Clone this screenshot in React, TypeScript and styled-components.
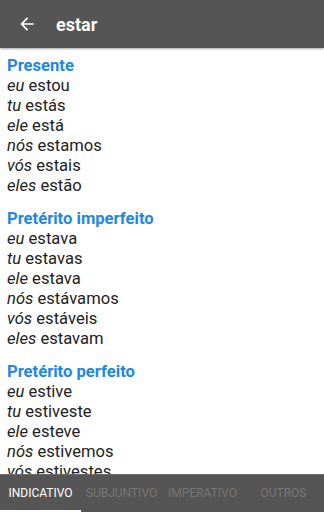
import React from 'react';
import styled, { createGlobalStyle } from 'styled-components';

type Row = { pronoun: string; form: string };
type Tense = { title: string; rows: Row[] };

const pronouns = ['eu', 'tu', 'ele', 'nós', 'vós', 'eles'];

const make = (title: string, forms: string[]): Tense => ({
  title,
  rows: forms.map((form, i) => ({ pronoun: pronouns[i], form })),
});

const tenses: Tense[] = [
  make('Presente', ['estou', 'estás', 'está', 'estamos', 'estais', 'estão']),
  make('Pretérito imperfeito', ['estava', 'estavas', 'estava', 'estávamos', 'estáveis', 'estavam']),
  make('Pretérito perfeito', ['estive', 'estiveste', 'esteve', 'estivemos', 'estivestes', 'estiveram']),
];

const tabs = ['INDICATIVO', 'SUBJUNTIVO', 'IMPERATIVO', 'OUTROS'];

const GlobalStyle = createGlobalStyle`
  html, body {
    margin: 0;
    padding: 0;
    background: #ffffff;
    font-family: Roboto, "Liberation Sans", sans-serif;
  }
`;

const Screen = styled.div`
  width: 324px;
  height: 512px;
  display: flex;
  flex-direction: column;
  overflow: hidden;
  background: #ffffff;
`;

const Toolbar = styled.header`
  flex: 0 0 48px;
  display: flex;
  align-items: center;
  background: #555555;
  box-shadow: 0 1px 2px rgba(0, 0, 0, 0.35);
  position: relative;
  z-index: 1;
`;

const BackButton = styled.button`
  width: 20px;
  height: 20px;
  margin-left: 17px;
  padding: 0;
  border: 0;
  background: none;
  display: flex;
`;

const Title = styled.h1`
  margin: 0 0 0 19px;
  color: #ffffff;
  font-size: 18px;
  font-weight: 700;
`;

const Content = styled.main`
  flex: 1;
  overflow: hidden;
  padding: 8px 8px 0 7px;
  display: flex;
  flex-direction: column;
  gap: 13px;
`;

const Section = styled.section`
  display: flex;
  flex-direction: column;
`;

const TenseTitle = styled.h2`
  margin: 0;
  color: #1e88e5;
  font-size: 16.6px;
  line-height: 20px;
  font-weight: 700;
`;

const Line = styled.div`
  color: #222222;
  font-size: 16.6px;
  line-height: 20px;
`;

const Pronoun = styled.i``;

const TabBar = styled.nav`
  flex: 0 0 38px;
  display: grid;
  grid-template-columns: repeat(4, 1fr);
  background: #555555;
  border-top: 1px solid #6a6a6a;
  box-sizing: border-box;
`;

const Tab = styled.div<{ $active?: boolean }>`
  position: relative;
  padding-top: 11px;
  text-align: center;
  white-space: nowrap;
  font-size: 12px;
  line-height: 14px;
  font-weight: 400;
  color: ${(p) => (p.$active ? '#ffffff' : '#767676')};

  &::after {
    content: '';
    display: ${(p) => (p.$active ? 'block' : 'none')};
    position: absolute;
    left: 0;
    right: 0;
    bottom: 0;
    height: 2px;
    background: #ffffff;
  }
`;

export default function App() {
  return (
    <>
      <GlobalStyle />
      <Screen>
        <Toolbar>
          <BackButton aria-label="back">
            <svg width="20" height="20" viewBox="0 0 24 24" fill="#ffffff">
              <path d="M20 11H7.83l5.59-5.59L12 4l-8 8 8 8 1.41-1.41L7.83 13H20v-2z" />
            </svg>
          </BackButton>
          <Title>estar</Title>
        </Toolbar>
        <Content>
          {tenses.map((t) => (
            <Section key={t.title}>
              <TenseTitle>{t.title}</TenseTitle>
              {t.rows.map((r) => (
                <Line key={r.pronoun}>
                  <Pronoun>{r.pronoun}</Pronoun> {r.form}
                </Line>
              ))}
            </Section>
          ))}
        </Content>
        <TabBar>
          {tabs.map((t, i) => (
            <Tab key={t} $active={i === 0}>
              {t}
            </Tab>
          ))}
        </TabBar>
      </Screen>
    </>
  );
}
